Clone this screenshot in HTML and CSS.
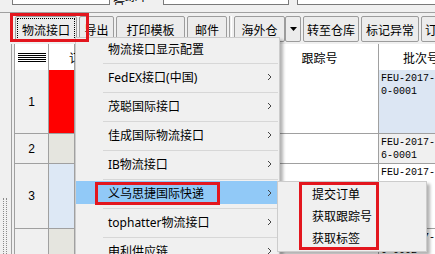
FILE: index.html
```html
<!DOCTYPE html>
<html lang="zh-CN">
<head>
    <meta charset="UTF-8">
    <title>物流接口</title>
    <link rel="stylesheet" href="styles.css">
</head>
<body>
    <div class="top-strip">
        <div class="field field-a"></div>
        <div class="field-label"><span>追踪单号</span></div>
        <div class="field field-b"></div>
        <div class="field field-c"></div>
    </div>

    <div class="toolbar">
        <button class="tb-btn tb-focus btn-logistics">物流接口</button>
        <button class="tb-btn btn-export">导出</button>
        <button class="tb-btn btn-print">打印模板</button>
        <button class="tb-btn btn-mail">邮件</button>
        <span class="tb-sep"></span>
        <button class="tb-btn btn-overseas">海外仓</button>
        <button class="tb-btn btn-drop">
            <svg width="7" height="4" viewBox="0 0 7 4"><polygon points="0,0 7,0 3.5,4" fill="#000"/></svg>
        </button>
        <button class="tb-btn btn-warehouse">转至仓库</button>
        <button class="tb-btn btn-mark">标记异常</button>
        <button class="tb-btn btn-order">订单</button>
    </div>

    <div class="main">
        <div class="gutter"><div class="grip"></div></div>
        <div class="grid-frame">
            <div class="grid">
                <div class="cell head rowhdr"><span class="lines-icon"></span></div>
                <div class="cell head col-color"><span class="head-text">订</span></div>
                <div class="cell head"></div>
                <div class="cell head center">跟踪号</div>
                <div class="cell head batch-head">批次号</div>

                <div class="cell rowhdr">1</div>
                <div class="cell color-red"></div>
                <div class="cell"></div>
                <div class="cell"></div>
                <div class="cell batch bg-blue">FEU-2017-<br>0-0001</div>

                <div class="cell rowhdr">2</div>
                <div class="cell color-grey"></div>
                <div class="cell"></div>
                <div class="cell"></div>
                <div class="cell batch bg-grey">FEU-2017-<br>6-0001</div>

                <div class="cell rowhdr">3</div>
                <div class="cell color-blue"></div>
                <div class="cell"></div>
                <div class="cell"></div>
                <div class="cell batch">FEU-2017-<br>6-0002</div>

                <div class="cell rowhdr">4</div>
                <div class="cell color-grey"></div>
                <div class="cell"></div>
                <div class="cell"></div>
                <div class="cell batch">FEU-2017-<br>0-0002</div>
            </div>
        </div>
    </div>

    <div class="menu">
        <div class="menu-item menu-first">物流接口显示配置</div>
        <div class="menu-sep"></div>
        <div class="menu-item">FedEX接口(中国)<svg class="chev" width="5" height="8" viewBox="0 0 5 8"><polyline points="1,1 4,4 1,7" fill="none" stroke="#444" stroke-width="1"/></svg></div>
        <div class="menu-sep"></div>
        <div class="menu-item">茂聪国际接口<svg class="chev" width="5" height="8" viewBox="0 0 5 8"><polyline points="1,1 4,4 1,7" fill="none" stroke="#444" stroke-width="1"/></svg></div>
        <div class="menu-sep"></div>
        <div class="menu-item">佳成国际物流接口<svg class="chev" width="5" height="8" viewBox="0 0 5 8"><polyline points="1,1 4,4 1,7" fill="none" stroke="#444" stroke-width="1"/></svg></div>
        <div class="menu-sep"></div>
        <div class="menu-item">IB物流接口<svg class="chev" width="5" height="8" viewBox="0 0 5 8"><polyline points="1,1 4,4 1,7" fill="none" stroke="#444" stroke-width="1"/></svg></div>
        <div class="menu-sep"></div>
        <div class="menu-item active">义乌思捷国际快递<svg class="chev" width="5" height="8" viewBox="0 0 5 8"><polyline points="1,1 4,4 1,7" fill="none" stroke="#444" stroke-width="1"/></svg></div>
        <div class="menu-sep"></div>
        <div class="menu-item">tophatter物流接口<svg class="chev" width="5" height="8" viewBox="0 0 5 8"><polyline points="1,1 4,4 1,7" fill="none" stroke="#444" stroke-width="1"/></svg></div>
        <div class="menu-sep"></div>
        <div class="menu-item">申利供应链<svg class="chev" width="5" height="8" viewBox="0 0 5 8"><polyline points="1,1 4,4 1,7" fill="none" stroke="#444" stroke-width="1"/></svg></div>
    </div>

    <div class="submenu">
        <div class="sub-item">提交订单</div>
        <div class="sub-item">获取跟踪号</div>
        <div class="sub-item">获取标签</div>
    </div>

    <!-- red highlight frames -->
    <div class="mark mark-button"></div>
    <div class="mark mark-item"></div>
    <div class="mark mark-sub"></div>
</body>
</html>
```

FILE: styles.css
```css
body {
    margin: 0;
    width: 435px;
    height: 254px;
    overflow: hidden;
    background: #f0f0f0;
    font-family: "Noto Sans", "Noto Sans CJK SC", sans-serif;
    font-size: 12px;
    color: #000;
}

/* top input row, mostly scrolled off */
.top-strip {
    display: flex;
    height: 5px;
}
.field {
    height: 5px;
    box-sizing: border-box;
    background: #fff;
    border: 1px solid #7a7a7a;
    border-top: none;
}
.field-a {
    margin-left: 12px;
    width: 98px;
}
.field-label {
    margin-left: 3px;
    width: 47px;
    height: 5px;
    overflow: hidden;
    font-family: "Noto Sans CJK SC", sans-serif;
}
.field-label span {
    display: block;
    line-height: 12px;
    margin-top: -10px;
}
.field-b {
    margin-left: 3px;
    width: 126px;
}
.field-c {
    margin-left: 8px;
    flex: 1;
    border-right: none;
}

/* toolbar */
.toolbar {
    margin-top: 7px;
    border-top: 1px solid #a0a0a0;
    padding: 3px 0 2px 15px;
    display: flex;
    gap: 2px;
    white-space: nowrap;
}
.tb-btn {
    height: 26px;
    padding: 0;
    box-sizing: border-box;
    background: #ececec;
    border: 1px solid #9c9c9c;
    border-radius: 2px;
    font-family: "Noto Sans CJK SC", sans-serif;
    font-size: 12px;
    color: #000;
    flex-shrink: 0;
    overflow: hidden;
}
.tb-focus {
    outline: 1px dotted #000;
    outline-offset: -3px;
}
.btn-logistics { width: 62px; }
.btn-export { width: 35px; }
.btn-print { width: 69px; }
.btn-mail { width: 40px; }
.btn-overseas { width: 51px; }
.btn-drop {
    width: 16px;
    margin-left: -2px;
    display: flex;
    align-items: center;
    justify-content: center;
}
.btn-warehouse { width: 56px; }
.btn-mark { width: 58px; }
.btn-order {
    width: 40px;
    text-align: left;
    padding-left: 3px;
}
.tb-sep {
    width: 1px;
    height: 26px;
    border-left: 1px solid #a0a0a0;
    border-right: 1px solid #fff;
    flex-shrink: 0;
}

/* grid */
.main {
    display: flex;
    height: 210px;
}
.gutter {
    width: 11px;
    flex-shrink: 0;
}
.grip {
    margin: 154px 0 0 3px;
    width: 2px;
    height: 60px;
    border-left: 1px dotted #8a8a8a;
    border-right: 1px dotted #8a8a8a;
}
.grid-frame {
    flex: 1;
    border-left: 1px solid #a0a0a0;
    padding-left: 2px;
    overflow: hidden;
}
.grid {
    display: grid;
    grid-template-columns: 34px 26px 186px 118px 84px;
    grid-template-rows: 26px 64px 30px 65px 60px;
    border-left: 1px solid #a0a0a0;
    background: #fff;
}
.cell {
    box-sizing: border-box;
    border-right: 1px solid #a0a0a0;
    border-bottom: 1px solid #a0a0a0;
    background: #fff;
}
.head {
    border-bottom: none;
    display: flex;
    align-items: center;
    font-family: "Noto Sans CJK SC", sans-serif;
    white-space: nowrap;
}
.center {
    justify-content: center;
}
.batch-head {
    padding-left: 24px;
}
.head-text {
    padding-left: 20px;
}
.rowhdr {
    background: #f0f0f0;
    display: flex;
    align-items: center;
    justify-content: center;
    font-family: "Liberation Sans", sans-serif;
    font-size: 12px;
}
.head.rowhdr {
    background: #fff;
}
.lines-icon {
    display: block;
    width: 28px;
    height: 9px;
    background: repeating-linear-gradient(to bottom, #000 0 1px, transparent 1px 2px);
}
.color-red { background: #ff0000; }
.color-grey { background: #e5e5df; }
.color-blue { background: #dde8f5; }
.bg-blue { background: #dce6f3; }
.bg-grey { background: #f0f0f0; }
.batch {
    padding: 2px 0 0 2px;
    font-family: "Liberation Mono", monospace;
    font-size: 10px;
    line-height: 13px;
    color: #000;
    white-space: nowrap;
}

/* context menu */
.menu {
    position: absolute;
    left: 75px;
    top: 37px;
    width: 205px;
    height: 240px;
    box-sizing: border-box;
    background: #f0f0f0;
    border: 1px solid #cccccc;
    box-shadow: 3px 3px 3px rgba(0, 0, 0, 0.3);
    font-family: "Noto Sans", "Noto Sans CJK SC", sans-serif;
}
.menu-item {
    height: 23px;
    padding: 0 7px 0 32px;
    display: flex;
    align-items: center;
    justify-content: space-between;
    white-space: nowrap;
}
.menu-first {
    height: 21px;
}
.menu-item.active {
    background: #91c9f7;
}
.menu-sep {
    height: 1px;
    margin: 4px 1px 1px 27px;
    background: #d7d7d7;
}
.chev {
    display: block;
}

.submenu {
    position: absolute;
    left: 277px;
    top: 181px;
    width: 150px;
    height: 71px;
    box-sizing: border-box;
    padding-top: 1px;
    background: #f0f0f0;
    border: 1px solid #cccccc;
    box-shadow: 3px 3px 3px rgba(0, 0, 0, 0.3);
    font-family: "Noto Sans CJK SC", sans-serif;
}
.sub-item {
    height: 22px;
    line-height: 22px;
    padding-left: 34px;
}

/* red highlight frames */
.mark {
    position: absolute;
    box-sizing: border-box;
    border: 3px solid #e3161e;
}
.mark-button {
    left: 10px;
    top: 13px;
    width: 79px;
    height: 29px;
}
.mark-item {
    left: 95px;
    top: 182px;
    width: 125px;
    height: 23px;
}
.mark-sub {
    left: 299px;
    top: 182px;
    width: 80px;
    height: 68px;
}
```
